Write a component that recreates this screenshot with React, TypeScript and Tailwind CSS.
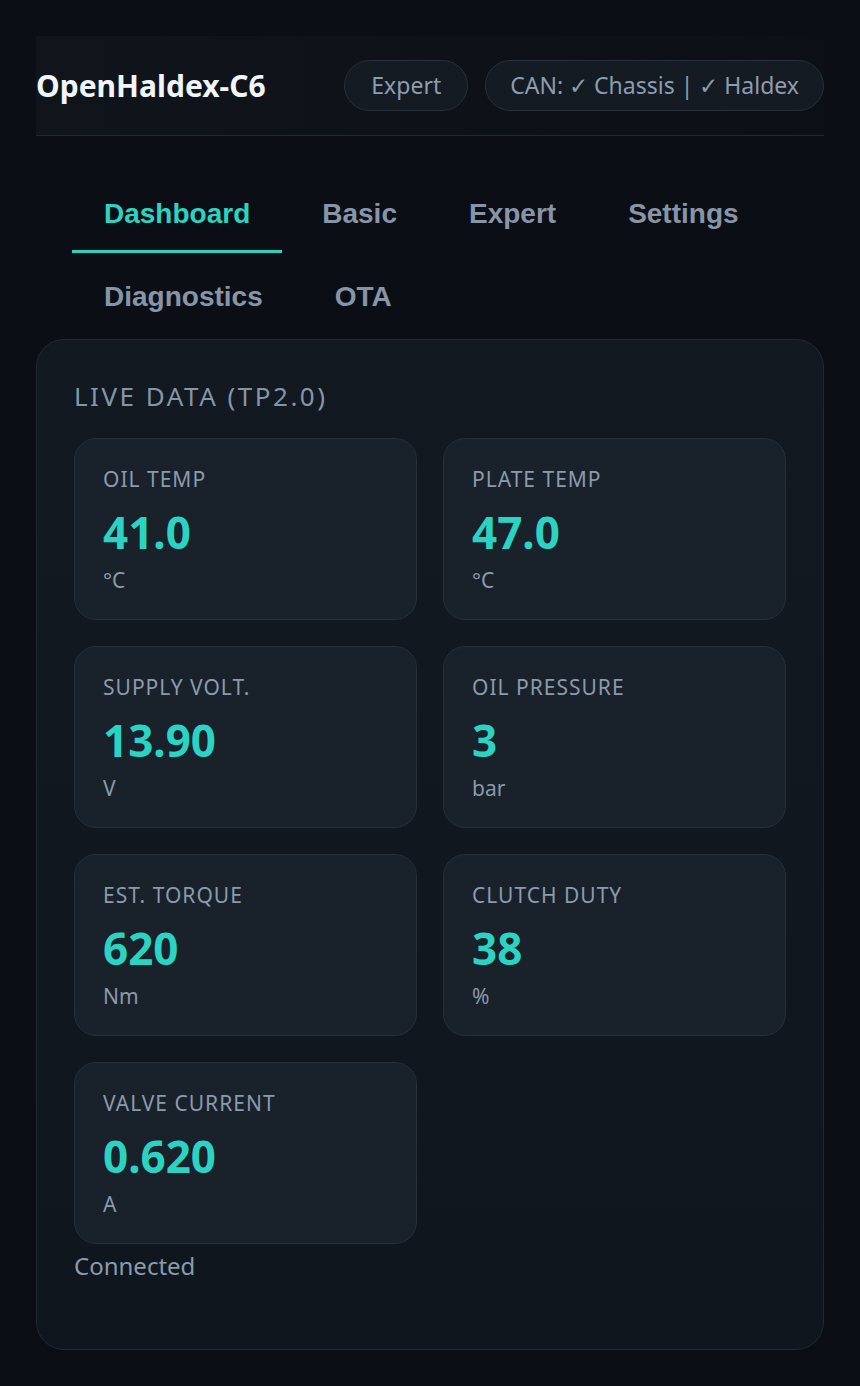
import React from 'react'

const metrics = [
  { label: 'Oil Temp', value: '41.0', unit: '°C' },
  { label: 'Plate Temp', value: '47.0', unit: '°C' },
  { label: 'Supply Volt.', value: '13.90', unit: 'V' },
  { label: 'Oil Pressure', value: '3', unit: 'bar' },
  { label: 'Est. Torque', value: '620', unit: 'Nm' },
  { label: 'Clutch Duty', value: '38', unit: '%' },
  { label: 'Valve Current', value: '0.620', unit: 'A' },
]

const tabs = ['Dashboard', 'Basic', 'Expert', 'Settings', 'Diagnostics', 'OTA']

function MetricCard({ label, value, unit }: { label: string; value: string; unit: string }) {
  return (
    <div className="rounded-[22px] border border-[#25303b] bg-[#19212a] px-[28px] pt-[28px] pb-[25px]">
      <div className="text-[21px] leading-[24px] uppercase tracking-[1px] text-[#8a9bad]">{label}</div>
      <div className="mt-[17px] text-[44px] leading-[48px] font-bold text-[#2bd3c3]">{value}</div>
      <div className="mt-[10px] text-[21px] leading-[28px] text-[#8a9bad]">{unit}</div>
    </div>
  )
}

export default function App() {
  return (
    <div className="min-h-screen bg-[#0b0f15] p-9 font-['Noto_Sans',sans-serif]">
      {/* Header */}
      <header className="flex items-center justify-between border-b border-[#1f2a33] bg-gradient-to-r from-[#10151b] to-[#0c1016] pt-6 pb-6">
        <h1 className="text-[30px] leading-[36px] font-bold text-[#f1f5f9]">OpenHaldex-C6</h1>
        <div className="flex items-center gap-[17px]">
          <span className="rounded-full border border-[#26313b] bg-[#141b22] px-[26px] py-[10px] text-[23px] leading-[29px] text-[#8d9db0]">
            Expert
          </span>
          <span className="rounded-full border border-[#26313b] bg-[#141b22] px-[24px] py-[10px] text-[23px] leading-[29px] text-[#8d9db0]">
            CAN: ✓ Chassis | ✓ Haldex
          </span>
        </div>
      </header>

      {/* Tabs */}
      <nav className="mt-[40px] mb-[3px] flex flex-wrap gap-x-2 gap-y-[6px] px-9 font-['Liberation_Sans',sans-serif]">
        {tabs.map((tab, i) => (
          <button
            key={tab}
            className={
              i === 0
                ? 'border-b-[3px] border-[#2bd3c3] px-8 pt-[22px] pb-[20px] text-[28px] leading-[32px] font-bold text-[#2bd3c3]'
                : 'border-b-[3px] border-transparent px-8 pt-[22px] pb-[20px] text-[28px] leading-[32px] font-bold text-[#8795a8]'
            }
          >
            {tab}
          </button>
        ))}
      </nav>

      {/* Live data */}
      <section className="rounded-[28px] border border-[#1f2a34] bg-gradient-to-b from-[#121920] to-[#10161d] px-[37px] pt-[40px] pb-[68px]">
        <h2 className="text-[26px] leading-[32px] uppercase tracking-[2.5px] text-[#8596aa]">Live Data (TP2.0)</h2>
        <div className="mt-[26px] grid grid-cols-2 gap-[26px]">
          {metrics.map((m) => (
            <MetricCard key={m.label} {...m} />
          ))}
        </div>
        <p className="mt-[7px] text-[24px] leading-[30px] text-[#8a9bad]">Connected</p>
      </section>
    </div>
  )
}
